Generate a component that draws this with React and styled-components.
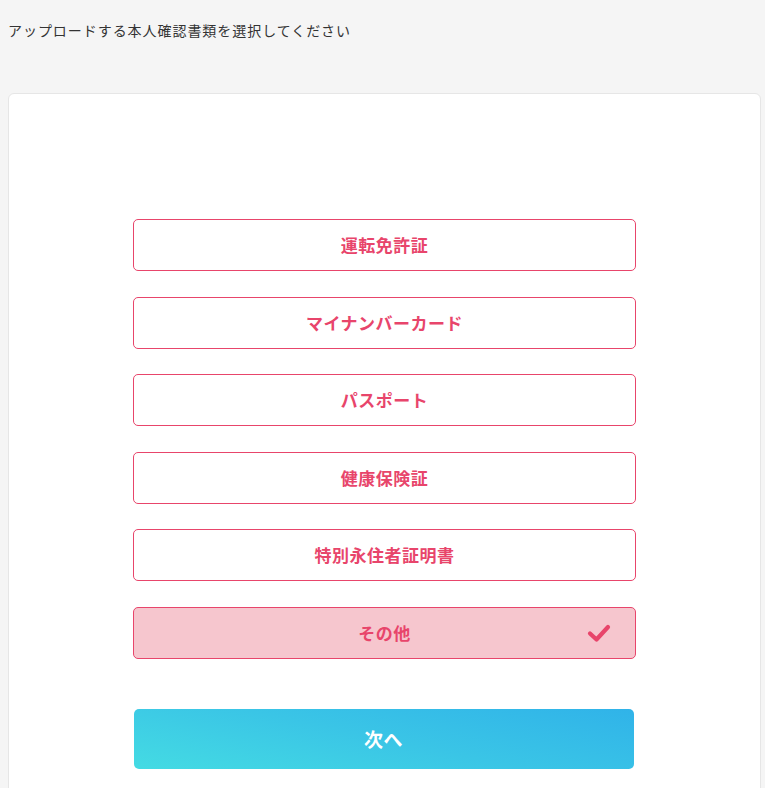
import React, { useState } from 'react';
import styled, { createGlobalStyle } from 'styled-components';

const GlobalStyle = createGlobalStyle`
  html, body {
    margin: 0;
    padding: 0;
    background: #f5f5f5;
    font-family: "Noto Sans CJK JP", "Noto Sans", sans-serif;
    color: #333;
  }
`;

const Page = styled.div`
  padding: 0 4px 0 8px;
`;

const Lead = styled.p`
  margin: 0;
  padding-top: 20px;
  height: 73px;
  font-size: 14px;
  line-height: 20px;
  letter-spacing: 0.95px;
  color: #333;
`;

const Card = styled.section`
  background: #fff;
  border: 1px solid #e6e6e6;
  border-radius: 6px;
  padding: 125px 0 40px;
  display: flex;
  flex-direction: column;
  align-items: center;
`;

const OptionList = styled.div`
  display: flex;
  flex-direction: column;
  gap: 25.5px;
  width: 503px;
`;

const Option = styled.button`
  position: relative;
  height: 52px;
  width: 100%;
  padding: 0;
  border: 1px solid #e8456b;
  border-radius: 5px;
  background: ${p => (p.$selected ? '#f6c6ce' : '#fff')};
  color: #e8456b;
  font-family: inherit;
  font-size: 17px;
  font-weight: 700;
  letter-spacing: 0.5px;
  line-height: 48px;
  cursor: pointer;
`;

const Check = styled.svg`
  position: absolute;
  right: 24px;
  top: 50%;
  transform: translateY(-50%);
  width: 24px;
  height: 20px;
`;

const NextButton = styled.button`
  margin-top: 50px;
  margin-right: 2px;
  width: 500px;
  height: 60px;
  border: none;
  border-radius: 5px;
  background: linear-gradient(12deg, #44dbe3 0%, #3ac5e6 50%, #30b3e9 100%);
  color: #fff;
  font-family: inherit;
  font-size: 19px;
  font-weight: 700;
  letter-spacing: 0.5px;
  cursor: pointer;
`;

const docs = ['運転免許証', 'マイナンバーカード', 'パスポート', '健康保険証', '特別永住者証明書', 'その他'];

export default function App() {
  const [selected, setSelected] = useState('その他');
  return (
    <Page>
      <GlobalStyle />
      <Lead>アップロードする本人確認書類を選択してください</Lead>
      <Card>
        <OptionList>
          {docs.map(d => (
            <Option key={d} $selected={selected === d} onClick={() => setSelected(d)}>
              {d}
              {selected === d && (
                <Check viewBox="0 0 24 20">
                  <path d="M3 10.5 L9.5 16.5 L21 4" fill="none" stroke="#e8456b" strokeWidth="4.2" strokeLinecap="round" strokeLinejoin="round" />
                </Check>
              )}
            </Option>
          ))}
        </OptionList>
        <NextButton>次へ</NextButton>
      </Card>
    </Page>
  );
}
